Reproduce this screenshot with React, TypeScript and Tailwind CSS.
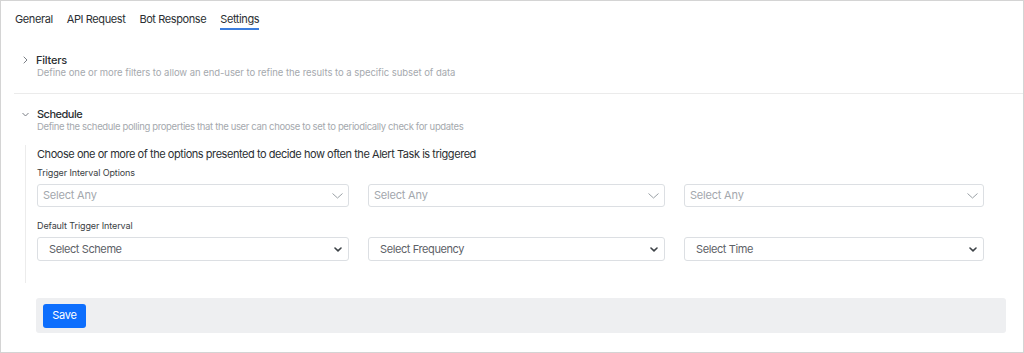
import React from "react";

const ChevronThin = () => (
  <svg width="11" height="6" viewBox="0 0 11 6" fill="none" stroke="#9aa0a6" strokeWidth="1">
    <path d="M0.5 0.5l5 4.5 5-4.5" />
  </svg>
);

const ChevronBold = () => (
  <svg width="8" height="5" viewBox="0 0 8 5" fill="none" stroke="#3d4247" strokeWidth="1.6" strokeLinecap="round" strokeLinejoin="round">
    <path d="M1 1l3 2.8L7 1" />
  </svg>
);

function SelectAny({ w }: { w: string }) {
  return (
    <div className={`${w} h-[23px] border border-[#dcdfe3] rounded-[3px] flex items-center justify-between pl-[5px] pr-[5px] text-[11px] tracking-[-0.2px] text-[#a3a7ad]`}>
      <span>Select Any</span>
      <ChevronThin />
    </div>
  );
}

function SelectBold({ w, label }: { w: string; label: string }) {
  return (
    <div className={`${w} h-[24px] border border-[#dcdfe3] rounded-[3px] flex items-center justify-between pl-[11px] pr-[6px] text-[11px] tracking-[-0.4px] text-[#5d6167]`}>
      <span>{label}</span>
      <ChevronBold />
    </div>
  );
}

export default function App() {
  return (
    <div className="w-[1024px] h-[353px] border border-[#d4d4d4] bg-white overflow-hidden" style={{ fontFamily: "Inter, 'Noto Sans', sans-serif" }}>
      <div className="flex gap-[14px] pl-[14px] pt-[11px] text-[11px] leading-[14px] tracking-[-0.4px] text-[#2b2f33]">
        <div className="pb-[4px]">General</div>
        <div className="pb-[4px]">API Request</div>
        <div className="pb-[4px]">Bot Response</div>
        <div className="pb-[2px] border-b-[2px] border-[#3b7ddd]">Settings</div>
      </div>

      <div className="ml-[13px] pt-[23px] pb-[14px] border-b border-[#ebebeb]">
        <div className="flex items-center gap-[8px] pl-[9px]">
          <svg width="5" height="8" viewBox="0 0 5 8" fill="none" stroke="#7a7f85" strokeWidth="1">
            <path d="M0.7 0.7l3.3 3.3-3.3 3.3" />
          </svg>
          <span className="text-[11px] leading-[14px] font-medium tracking-[-0.2px] text-[#2b2f33]">Filters</span>
        </div>
        <div className="pl-[23px] text-[9.5px] leading-[12px] tracking-[-0.05px] text-[#a5a9ae]">Define one or more filters to allow an end-user to refine the results to a specific subset of data</div>
      </div>

      <div className="ml-[13px] pt-[13px]">
        <div className="flex items-center gap-[8px] pl-[8px]">
          <svg width="7" height="5" viewBox="0 0 7 5" fill="none" stroke="#7a7f85" strokeWidth="1">
            <path d="M0.5 1l3 3 3-3" />
          </svg>
          <span className="text-[11px] leading-[14px] font-medium tracking-[-0.5px] text-[#2b2f33]">Schedule</span>
        </div>
        <div className="pl-[23px] text-[9.5px] leading-[12px] tracking-[-0.35px] text-[#a5a9ae]">Define the schedule polling properties that the user can choose to set to periodically check for updates</div>
      </div>

      <div className="ml-[24px] mt-[12px] border-l border-[#ececec] pl-[11px] pt-[2px] pb-[22px]">
        <div className="text-[11px] leading-[14px] tracking-[-0.45px] text-[#2b2f33]">Choose one or more of the options presented to decide how often the Alert Task is triggered</div>
        <div className="text-[9px] leading-[12px] tracking-[-0.1px] text-[#3a3e43] mt-[6px]">Trigger Interval Options</div>
        <div className="flex gap-[19px] mt-[5px]">
          <SelectAny w="w-[312px]" />
          <SelectAny w="w-[297px]" />
          <SelectAny w="w-[300px]" />
        </div>
        <div className="text-[9px] leading-[12px] tracking-[-0.1px] text-[#3a3e43] mt-[13px]">Default Trigger Interval</div>
        <div className="flex gap-[19px] mt-[5px]">
          <SelectBold w="w-[312px]" label="Select Scheme" />
          <SelectBold w="w-[297px]" label="Select Frequency" />
          <SelectBold w="w-[300px]" label="Select Time" />
        </div>
      </div>

      <div className="ml-[35px] mr-[17px] mt-[15px] h-[35px] bg-[#eeeff1] rounded-[3px] flex items-center pl-[7px]">
        <button className="h-[24px] w-[43px] rounded-[3px] bg-[#0d6efd] text-white text-[11px] tracking-[-0.2px]">Save</button>
      </div>
    </div>
  );
}
